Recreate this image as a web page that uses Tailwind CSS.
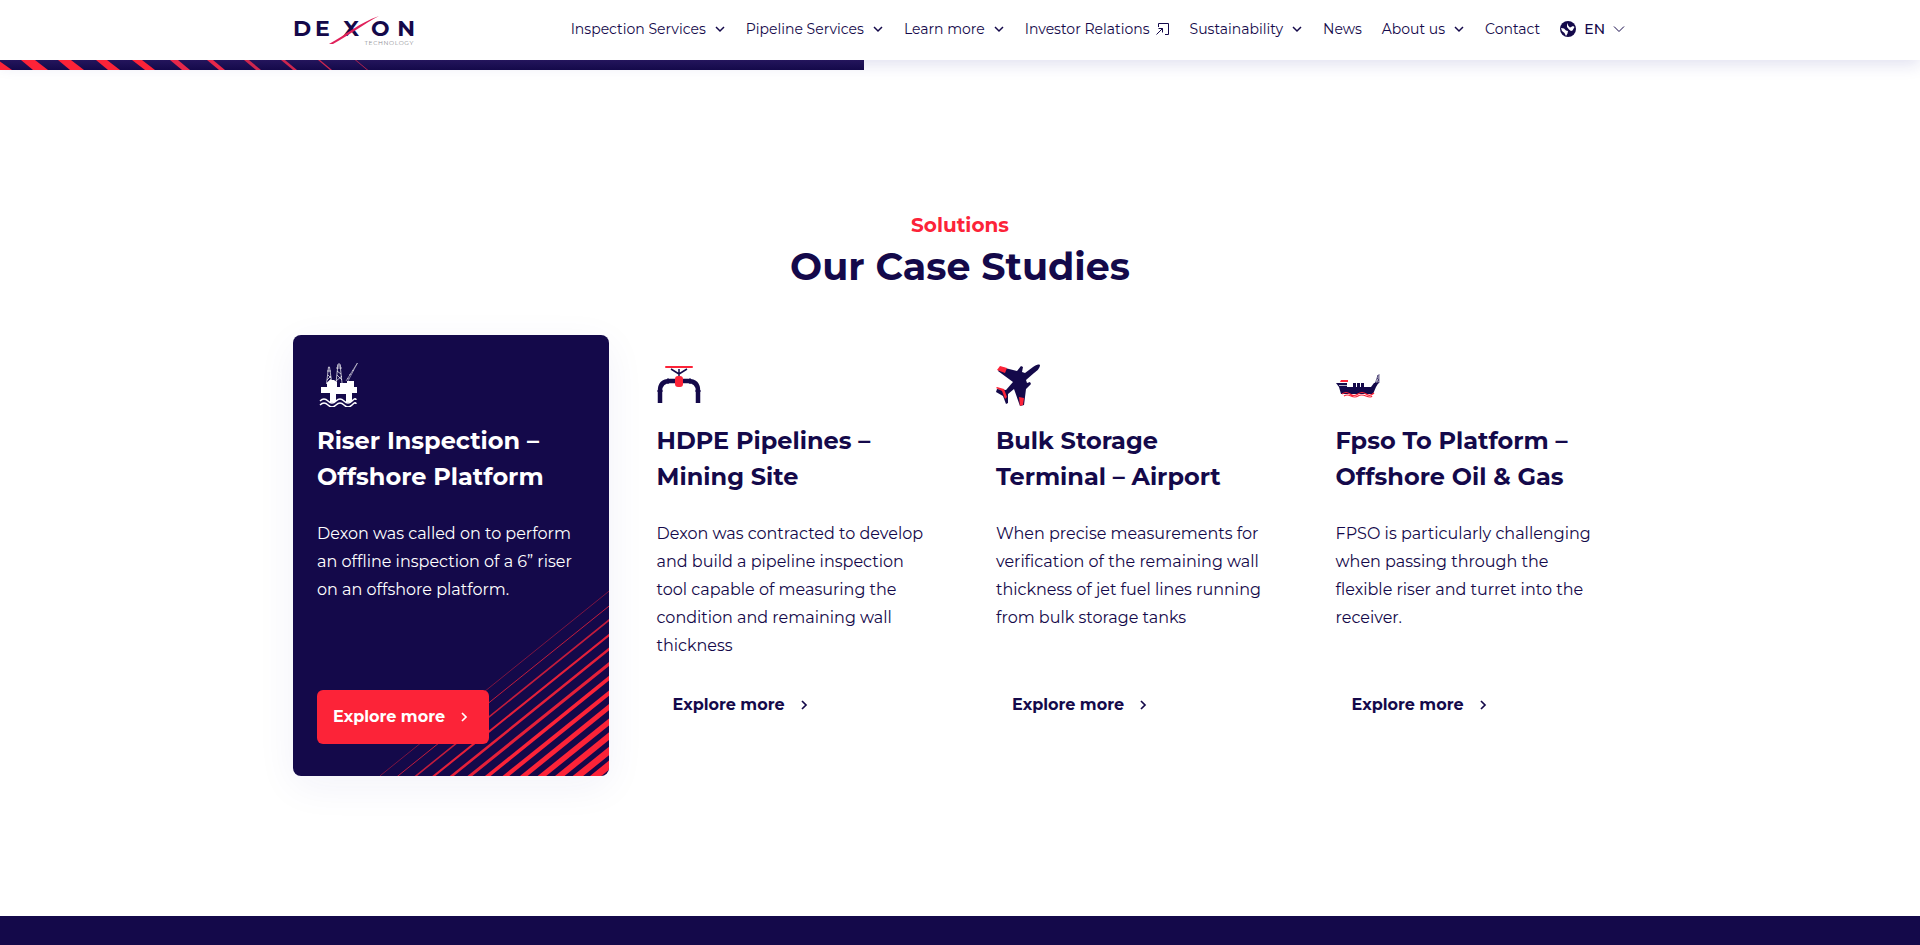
<!DOCTYPE html>
<html lang="en">
<head>
    <meta charset="UTF-8">
    <meta name="viewport" content="width=device-width, initial-scale=1.0">
    <title>Dexon Technology - Case Studies</title>
    <script src="https://cdn.jsdelivr.net/npm/@tailwindcss/browser@4"></script>
</head>
<body class="min-h-screen flex flex-col bg-white font-['Montserrat','Inter',sans-serif] text-[#14094a]">

    <!-- Shared icons -->
    <svg class="hidden" aria-hidden="true">
        <symbol id="chevron-down" viewBox="-1 -1 12 8"><path d="M1 1l4 4 4-4" fill="none" stroke="currentColor" stroke-width="1.5"/></symbol>
        <symbol id="chevron-right" viewBox="0 0 8 10"><path d="M1 1l4 4-4 4" fill="none" stroke="currentColor" stroke-width="1.7"/></symbol>
    </svg>

    <header class="relative z-10 bg-white shadow-[0_4px_16px_rgba(30,25,140,0.14)]">
        <div class="max-w-[1334px] mx-auto h-15 flex items-center justify-between">
            <a href="#" aria-label="Dexon Technology">
                <svg class="w-[122px] h-8" viewBox="0 0 122 32">
                    <g font-size="22" font-weight="700" fill="#14094a">
                        <text x="0" y="22">D</text>
                        <text x="22" y="22">E</text>
                        <text x="58" y="22" text-anchor="middle">X</text>
                        <text x="78" y="22">O</text>
                        <text x="122" y="22" text-anchor="end">N</text>
                    </g>
                    <path d="M36 30C54 20 66 9 86 2c-15 8-28 18-46 28z" fill="#e0215a"/>
                    <text x="121" y="31" text-anchor="end" font-size="6" class="tracking-widest" fill="#8a8a90">TECHNOLOGY</text>
                </svg>
            </a>

            <nav class="flex items-center gap-5 pr-0.5 pb-0.5 text-sm whitespace-nowrap">
                <button class="flex items-center gap-2">Inspection Services <svg class="w-3 h-2"><use href="#chevron-down"/></svg></button>
                <button class="flex items-center gap-2">Pipeline Services <svg class="w-3 h-2"><use href="#chevron-down"/></svg></button>
                <button class="flex items-center gap-2">Learn more <svg class="w-3 h-2"><use href="#chevron-down"/></svg></button>
                <a href="#" class="flex items-center gap-1.5">Investor Relations
                    <svg class="w-3.5 h-3.5" viewBox="2 1 14 14" fill="none" stroke="currentColor"><path d="M4.500 6V2.500h10v11H11M2.500 13.500l6-6M4.500 7.500h4v4"/></svg>
                </a>
                <button class="flex items-center gap-2">Sustainability <svg class="w-3 h-2"><use href="#chevron-down"/></svg></button>
                <a href="#">News</a>
                <button class="flex items-center gap-2">About us <svg class="w-3 h-2"><use href="#chevron-down"/></svg></button>
                <a href="#">Contact</a>
                <button class="flex items-center gap-2 font-medium">
                    <svg class="w-4 h-4" viewBox="0 0 16 16">
                        <circle cx="8" cy="8" r="8" fill="#14094a"/>
                        <path d="M1 7l3 .5 2 2 2 .5-.5 2.500L6 15l-1.500-3L2 10zM7 2l1.500 3L10 6.500l3-1.500 1.500 1-2 3.500L11 10 9 8.500 7 6z" fill="#fff"/>
                    </svg>
                    EN
                    <svg class="w-3 h-2" viewBox="0 0 12 7" fill="none" stroke="currentColor"><path d="M1 1l5 5 5-5"/></svg>
                </button>
            </nav>
        </div>

        <!-- Striped bar hanging under the header -->
        <div class="absolute left-0 top-full w-[45%] h-[10px] bg-linear-to-b from-[#24155c] to-[#14094a]">
            <svg class="w-[380px] h-[10px]" viewBox="0 0 380 10">
                <g fill="#fc2338">
                    <path d="M-16 0h14l14 10h-16z"/>
                    <path d="M21 0h14l13 10H33z"/>
                    <path d="M58 0h13l13 10H70z"/>
                    <path d="M96 0h11l13 10h-12z"/>
                    <path d="M132 0h10l13 10h-10z"/>
                </g>
                <g fill="#e8284a">
                    <path d="M170 0h8l12 10h-8z"/>
                    <path d="M207 0h6l12 10h-6z"/>
                </g>
                <g fill="#cf274f">
                    <path d="M244 0h5l12 10h-5z"/>
                    <path d="M281 0h4l12 10h-4z"/>
                    <path d="M318 0h2l12 10h-2z"/>
                    <path d="M355 0h1l12 10h-1z"/>
                </g>
            </svg>
        </div>
    </header>

    <main class="pt-[150px] pb-[140px]">
        <div class="text-center">
            <p class="text-xl leading-[30px] font-bold text-[#fc2338]">Solutions</p>
            <h1 class="text-[38px] leading-[54px] font-bold">Our Case Studies</h1>
        </div>

        <div class="max-w-[1334px] mx-auto mt-[41px] grid grid-cols-4 gap-6">

            <article class="relative flex flex-col items-start overflow-hidden rounded-lg bg-[#14094a] text-white px-6 pt-7 pb-8 shadow-[0_10px_40px_rgba(40,30,160,0.06)]">
                <svg class="absolute right-0 bottom-0 w-[229px] h-[185px]" viewBox="0 0 229 185" stroke="#fc2338">
                    <g opacity="0.75">
                        <path d="M-20 201L249-16" stroke-width="0.600"/>
                        <path d="M-2 201L249-1" stroke-width="1"/>
                        <path d="M16 201L249 13" stroke-width="1.600"/>
                    </g>
                    <g opacity="0.9">
                        <path d="M34 201L249 28" stroke-width="2.100"/>
                        <path d="M52 201L249 42" stroke-width="2.600"/>
                        <path d="M70 201L249 57" stroke-width="3.100"/>
                    </g>
                    <path d="M88 201L249 71" stroke-width="3.600"/>
                    <path d="M106 201L249 86" stroke-width="4.200"/>
                    <path d="M124 201L249 100" stroke-width="4.800"/>
                    <path d="M142 201L249 115" stroke-width="5.400"/>
                    <path d="M160 201L249 129" stroke-width="6"/>
                    <path d="M178 201L249 144" stroke-width="6.600"/>
                    <path d="M196 201L249 158" stroke-width="7.200"/>
                </svg>
                <svg class="w-11 h-11" viewBox="0 0 44 44" fill="#fff">
                    <path d="M4 24h6v-4l3-3h4l3 2v5h3v-4h7v-2h7v6h3v6h-5v9h-6v-8h-10v8h-6v-9H4z"/>
                    <g fill="none" stroke="#fff" stroke-width=".7">
                        <path d="M9.500 21l2-17h1l2 14M10 17l4-4M11 12l3 3M10 8h4M10 20l4-4" />
                        <path d="M19 20l2-19h2l2 19M19 18l6-5M20 12l5 5M20 8l4 3M19 5h6M20 3h4"/>
                        <path d="M29 18L41-1M31 18L41-1M30 16l2-1M32 12l2-1M35 8l2-1" stroke-width=".5"/>
                        <path d="M3 38q4-4 8 0t8 0 8 0 8 0 4-1M3 42q4-4 8 0t8 0 8 0 8 0 4-1" stroke-width="1.500"/>
                    </g>
                </svg>
                <h2 class="mt-4 text-2xl leading-9 font-bold">Riser Inspection –<br>Offshore Platform</h2>
                <p class="mt-[25px] mb-5 text-base leading-7">Dexon was called on to perform an offline inspection of a 6” riser on an offshore platform.</p>
                <a href="#" class="relative mt-auto h-[54px] flex items-center gap-4 rounded-md bg-[#fc2338] pl-4 pr-5 text-base font-bold">Explore more <svg class="w-2 h-[10px]"><use href="#chevron-right"/></svg></a>
            </article>

            <article class="flex flex-col items-start px-6 pt-7 pb-11">
                <svg class="w-11 h-11" viewBox="0 0 44 44">
                    <g fill="none" stroke="#14094a">
                        <path d="M3 40V28Q3 18 13 18H31Q41 18 41 28V40" stroke-width="4.500"/>
                        <path d="M22 6v10M14 6l8 5 8-5" stroke-width="1.500"/>
                        <path d="M11 15v6M33 15v6M0 28h6M38 28h6"/>
                    </g>
                    <g fill="#fc2338">
                        <rect x="8" y="3" width="28" height="2" rx="1"/>
                        <rect x="18" y="13" width="8" height="11" rx="3"/>
                    </g>
                </svg>
                <h2 class="mt-4 text-2xl leading-9 font-bold">HDPE Pipelines –<br>Mining Site</h2>
                <p class="mt-[25px] mb-[18px] text-base leading-7">Dexon was contracted to develop and build a pipeline inspection tool capable of measuring the condition and remaining wall thickness</p>
                <a href="#" class="mt-auto h-[54px] flex items-center gap-4 pl-4 pr-5 text-base font-bold">Explore more <svg class="w-2 h-[10px]"><use href="#chevron-right"/></svg></a>
            </article>

            <article class="flex flex-col items-start px-6 pt-7 pb-11">
                <svg class="w-11 h-11" viewBox="0 0 44 44">
                    <path d="M44 2c0 3-3 6-6 8l-8 7 1 3 3-1 1 2-5 5-2 16-4 1-6-17-6 5v9l-2 1-3-8-7-4 1-3 9 1 7-8L2 8l3-4 16 4 4-5 2 1-1 5 3 1 8-6c3-2 5-3 7-2z" fill="#14094a"/>
                    <g fill="#fc2338">
                        <path d="M4 3l7 2-2 5-8-3zM23 34l5 1-1 7-3 1zM1 24l7 2 3 8-2 2-3-8-6-3z"/>
                    </g>
                </svg>
                <h2 class="mt-4 text-2xl leading-9 font-bold">Bulk Storage<br>Terminal – Airport</h2>
                <p class="mt-[25px] mb-[18px] text-base leading-7">When precise measurements for verification of the remaining wall thickness of jet fuel lines running from bulk storage tanks</p>
                <a href="#" class="mt-auto h-[54px] flex items-center gap-4 pl-4 pr-5 text-base font-bold">Explore more <svg class="w-2 h-[10px]"><use href="#chevron-right"/></svg></a>
            </article>

            <article class="flex flex-col items-start px-6 pt-7 pb-11">
                <svg class="w-11 h-11" viewBox="0 0 44 44">
                    <path d="M0 20h11v4h24l3-4 5-1-3 5-3 7H5l-2-7z" fill="#14094a"/>
                    <path d="M3 22.500h8" stroke="#fff" stroke-width=".7"/>
                    <path d="M17 20h3v4h-3zM21 20h3v4h-3zM25 20h3v4h-3z" fill="#14094a"/>
                    <path d="M39 21l3-9v9M43 11v9M38 21l5-4M41 15l2 2" fill="none" stroke="#14094a" stroke-width=".6"/>
                    <path d="M5 17h7v2H4z" fill="#fc2338"/>
                    <path d="M6 31q4-3 8 0t8 0 8 0 8-1M8 33q3-2 7 0t7 0 8 0 6 0" fill="none" stroke="#fc2338" stroke-width="1.200"/>
                </svg>
                <h2 class="mt-4 text-2xl leading-9 font-bold">Fpso To Platform –<br>Offshore Oil &amp; Gas</h2>
                <p class="mt-[25px] mb-[18px] text-base leading-7">FPSO is particularly challenging when passing through the flexible riser and turret into the receiver.</p>
                <a href="#" class="mt-auto h-[54px] flex items-center gap-4 pl-4 pr-5 text-base font-bold">Explore more <svg class="w-2 h-[10px]"><use href="#chevron-right"/></svg></a>
            </article>

        </div>
    </main>

    <footer class="flex-1 bg-[#14094a]"></footer>

</body>
</html>
